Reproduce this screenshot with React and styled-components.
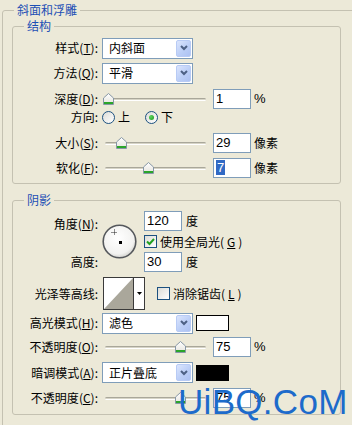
import React from 'react';
import styled, { createGlobalStyle } from 'styled-components';

const GlobalStyle = createGlobalStyle`
  html, body {
    margin: 0;
    padding: 0;
    background: #ece9d8;
  }
  body {
    font-family: "Noto Sans CJK SC", "Noto Sans", sans-serif;
    font-size: 12px;
    color: #000;
  }
`;

const Panel = styled.div`
  position: relative;
  width: 352px;
  height: 425px;
  overflow: hidden;
  background: #ece9d8;
`;

const OuterGroup = styled.fieldset`
  box-sizing: border-box;
  width: 360px;
  height: 440px;
  min-width: 0;
  margin: 3px 0 0 2px;
  padding: 2px 0 0 9px;
  border: 1px solid #c4c1b1;
  border-radius: 3px;
`;

const Caption = styled.legend`
  margin-left: ${(p) => p.$indent}px;
  padding: 0 3px;
  font-size: 12px;
  line-height: 14px;
  color: #1c4fb5;
`;

const SubGroup = styled.fieldset`
  box-sizing: border-box;
  width: 329px;
  min-width: 0;
  margin: ${(p) => p.$mt || 0}px 0 0 0;
  padding: 0 0 ${(p) => p.$pb}px 0;
  border: 1px solid #c4c1b1;
  border-radius: 3px;
`;

const Row = styled.div`
  display: grid;
  grid-template-columns: 85px auto;
  column-gap: 4px;
  align-items: center;
  height: ${(p) => p.$h}px;
  margin-top: ${(p) => p.$mt || 0}px;
`;

const Label = styled.span`
  text-align: right;
  white-space: nowrap;
  line-height: 14px;
`;

const Controls = styled.div`
  display: flex;
  align-items: center;
`;

const Combo = styled.div`
  box-sizing: border-box;
  display: flex;
  align-items: center;
  width: 91px;
  height: 21px;
  padding: 1px;
  border: 1px solid #7f9db9;
  background: #fff;
`;

const ComboText = styled.span`
  flex: 1;
  padding-left: 5px;
  line-height: 14px;
`;

const ComboButton = styled.span`
  box-sizing: border-box;
  display: flex;
  align-items: center;
  justify-content: center;
  width: 15px;
  height: 17px;
  border: 1px solid #b8cbf5;
  border-radius: 2px;
  background: linear-gradient(135deg, #dbe5fd 0%, #bccff7 55%, #adc2f2 100%);
`;

const Track = styled.div`
  position: relative;
  width: 103px;
  height: 14px;
  margin-left: 1px;
  &::before {
    content: '';
    position: absolute;
    left: 2px;
    right: 0;
    top: 6px;
    height: 1px;
    border-top: 1px solid #a9a79a;
    border-bottom: 1px solid #fff;
    background: #d6d4c6;
    border-radius: 2px;
  }
`;

const Thumb = styled.span`
  position: absolute;
  top: 1px;
  width: 11px;
  height: 12px;
  line-height: 0;
`;

const NumBox = styled.div`
  box-sizing: border-box;
  width: 38px;
  height: 20px;
  margin-left: ${(p) => p.$ml || 0}px;
  padding-left: 2px;
  border: 1px solid #7f9db9;
  background: #fff;
  font-family: "Liberation Sans", Arial, sans-serif;
  font-size: 13px;
  line-height: 18px;
`;

const Selected = styled.span`
  padding: 0 1px;
  background: #316ac5;
  color: #fff;
`;

const Unit = styled.span`
  margin-left: ${(p) => p.$ml || 3}px;
  line-height: 14px;
  font-family: ${(p) => (p.$latin ? '"Liberation Sans", Arial, sans-serif' : 'inherit')};
  font-size: ${(p) => (p.$latin ? '13px' : '12px')};
`;

const Option = styled.label`
  display: flex;
  align-items: center;
  gap: 3px;
  margin-right: 15px;
  line-height: 14px;
`;

const RadioDot = styled.span`
  box-sizing: border-box;
  display: inline-flex;
  align-items: center;
  justify-content: center;
  width: 13px;
  height: 13px;
  border: 1px solid #1c5180;
  border-radius: 50%;
  background: linear-gradient(135deg, #dcdcd7, #fff);
  &::after {
    content: '';
    width: 5px;
    height: 5px;
    border-radius: 50%;
    background: ${(p) => (p.$on ? 'radial-gradient(circle at 35% 35%, #5fd35f, #1a9a1a)' : 'transparent')};
  }
`;

const Check = styled.label`
  display: flex;
  align-items: center;
  gap: 3px;
  margin-left: ${(p) => p.$ml || 0}px;
  line-height: 14px;
  white-space: nowrap;
`;

const CheckBox = styled.span`
  box-sizing: border-box;
  display: inline-flex;
  align-items: center;
  justify-content: center;
  width: 13px;
  height: 13px;
  border: 1px solid #1c5180;
  background: linear-gradient(135deg, #dcdcd7, #fff);
  line-height: 0;
`;

const AngleGrid = styled.div`
  display: grid;
  grid-template-columns: 89px 42px auto;
  grid-template-rows: 20px 21px 20px;
  padding-top: 4px;
`;

const AngleLabel = styled(Label)`
  grid-column: 1;
  grid-row: ${(p) => p.$row};
  align-self: ${(p) => p.$align || 'center'};
  padding-right: 4px;
`;

const Dial = styled.div`
  grid-column: 2;
  grid-row: 1 / 4;
  align-self: center;
  width: 35px;
  height: 35px;
  line-height: 0;
`;

const Cell = styled.div`
  grid-column: 3;
  grid-row: ${(p) => p.$row};
  display: flex;
  align-items: center;
`;

const ContourPicker = styled.div`
  box-sizing: border-box;
  display: flex;
  width: 42px;
  height: 33px;
  margin-left: 1px;
  border: 1px solid #3a3a3a;
  background: #fff;
  line-height: 0;
`;

const ContourArrow = styled.span`
  flex: 1;
  display: flex;
  align-items: center;
  justify-content: center;
  border-left: 1px solid #3a3a3a;
`;

const Swatch = styled.span`
  box-sizing: border-box;
  width: 33px;
  height: 16px;
  margin-left: 3px;
  border: 1px solid #000;
  background: ${(p) => p.$color};
`;

const Watermark = styled.div`
  position: absolute;
  left: 178px;
  top: 384px;
  font-family: "Liberation Sans", Arial, sans-serif;
  font-size: 35px;
  line-height: 1;
  letter-spacing: 0.3px;
  color: #1d6bcb;
  white-space: nowrap;
`;

const Chevron = () => (
  <svg width="8" height="6" viewBox="0 0 8 6">
    <polyline points="1,1 4,4 7,1" fill="none" stroke="#4d6185" strokeWidth="2" />
  </svg>
);

const ThumbIcon = () => (
  <svg width="11" height="12" viewBox="0 0 11 12">
    <defs>
      <linearGradient id="thumbFill" x1="0" y1="0" x2="0" y2="1">
        <stop offset="0" stopColor="#ffffff" />
        <stop offset="1" stopColor="#e4e3dc" />
      </linearGradient>
    </defs>
    <path d="M0.5 5 L5.5 0.5 L10.5 5 V11.5 H0.5 Z" fill="url(#thumbFill)" stroke="#8797a6" />
    <rect x="1" y="9" width="9" height="2" fill="#2aa52a" />
  </svg>
);

const CheckMark = () => (
  <svg width="9" height="9" viewBox="0 0 9 9">
    <polyline points="1,4.5 3.5,7 8,2" fill="none" stroke="#21a121" strokeWidth="2" />
  </svg>
);

const AngleDial = () => (
  <svg width="35" height="35" viewBox="0 0 35 35">
    <defs>
      <radialGradient id="dialFill" cx="0.45" cy="0.4" r="0.6">
        <stop offset="0" stopColor="#ffffff" />
        <stop offset="0.8" stopColor="#f2f2f0" />
        <stop offset="1" stopColor="#d4d4d0" />
      </radialGradient>
    </defs>
    <circle cx="17.5" cy="17.5" r="16.3" fill="url(#dialFill)" stroke="#55585c" strokeWidth="1.6" />
    <line x1="12.5" y1="5.5" x2="12.5" y2="11.5" stroke="#222" strokeDasharray="1 1" />
    <line x1="9.5" y1="8.5" x2="15.5" y2="8.5" stroke="#222" strokeDasharray="1 1" />
    <rect x="17" y="17" width="3" height="3" fill="#000" />
  </svg>
);

const ContourPreview = () => (
  <svg width="29" height="31" viewBox="0 0 29 31">
    <polygon points="0,31 29,0 29,31" fill="#aaa79b" />
  </svg>
);

const DownArrow = () => (
  <svg width="5" height="3" viewBox="0 0 5 3">
    <polygon points="0,0 5,0 2.5,3" fill="#000" />
  </svg>
);

const Key = ({ k, colon = true }) => (
  <>
    (<u>{k}</u>){colon ? ':' : ''}
  </>
);

const Select = ({ value }) => (
  <Combo>
    <ComboText>{value}</ComboText>
    <ComboButton>
      <Chevron />
    </ComboButton>
  </Combo>
);

const Slider = ({ pos, value, unit, latin }) => (
  <Controls>
    <Track>
      <Thumb style={{ left: Math.round(pos * 93) }}>
        <ThumbIcon />
      </Thumb>
    </Track>
    <NumBox $ml={7}>{value}</NumBox>
    <Unit $latin={latin}>{unit}</Unit>
  </Controls>
);

export default function App() {
  return (
    <>
      <GlobalStyle />
      <Panel>
        <OuterGroup>
          <Caption $indent={2}>斜面和浮雕</Caption>

          <SubGroup $pb={4}>
            <Caption $indent={11}>结构</Caption>
            <Row $h={24} $mt={3}>
              <Label>样式<Key k="T" /></Label>
              <Controls><Select value="内斜面" /></Controls>
            </Row>
            <Row $h={24} $mt={1}>
              <Label>方法<Key k="Q" /></Label>
              <Controls><Select value="平滑" /></Controls>
            </Row>
            <Row $h={22} $mt={3}>
              <Label>深度<Key k="D" /></Label>
              <Slider pos={0} value="1" unit="%" latin />
            </Row>
            <Row $h={14}>
              <Label>方向:</Label>
              <Controls>
                <Option><RadioDot />上</Option>
                <Option><RadioDot $on />下</Option>
              </Controls>
            </Row>
            <Row $h={22} $mt={8}>
              <Label>大小<Key k="S" /></Label>
              <Slider pos={0.14} value="29" unit="像素" />
            </Row>
            <Row $h={22} $mt={3}>
              <Label>软化<Key k="F" /></Label>
              <Slider pos={0.43} value={<Selected>7</Selected>} unit="像素" />
            </Row>
          </SubGroup>

          <SubGroup $mt={9} $pb={5}>
            <Caption $indent={11}>阴影</Caption>
            <AngleGrid>
              <AngleLabel $row={1} $align="end">角度<Key k="N" /></AngleLabel>
              <Dial><AngleDial /></Dial>
              <Cell $row={1}>
                <NumBox>120</NumBox>
                <Unit $ml={4}>度</Unit>
              </Cell>
              <Cell $row={2}>
                <Check>
                  <CheckBox><CheckMark /></CheckBox>
                  使用全局光<Key k="G" colon={false} />
                </Check>
              </Cell>
              <AngleLabel $row={3}>高度:</AngleLabel>
              <Cell $row={3}>
                <NumBox>30</NumBox>
                <Unit $ml={4}>度</Unit>
              </Cell>
            </AngleGrid>
            <Row $h={33} $mt={5}>
              <Label>光泽等高线:</Label>
              <Controls>
                <ContourPicker>
                  <ContourPreview />
                  <ContourArrow><DownArrow /></ContourArrow>
                </ContourPicker>
                <Check $ml={12}>
                  <CheckBox />
                  消除锯齿<Key k="L" colon={false} />
                </Check>
              </Controls>
            </Row>
            <Row $h={22} $mt={2}>
              <Label>高光模式<Key k="H" /></Label>
              <Controls>
                <Select value="滤色" />
                <Swatch $color="#fff" />
              </Controls>
            </Row>
            <Row $h={22} $mt={2}>
              <Label>不透明度<Key k="O" /></Label>
              <Slider pos={0.77} value="75" unit="%" latin />
            </Row>
            <Row $h={23} $mt={3}>
              <Label>暗调模式<Key k="A" /></Label>
              <Controls>
                <Select value="正片叠底" />
                <Swatch $color="#000" />
              </Controls>
            </Row>
            <Row $h={22} $mt={3}>
              <Label>不透明度<Key k="C" /></Label>
              <Slider pos={0.77} value="75" unit="%" latin />
            </Row>
          </SubGroup>
        </OuterGroup>
        <Watermark>UiBQ.CoM</Watermark>
      </Panel>
    </>
  );
}
